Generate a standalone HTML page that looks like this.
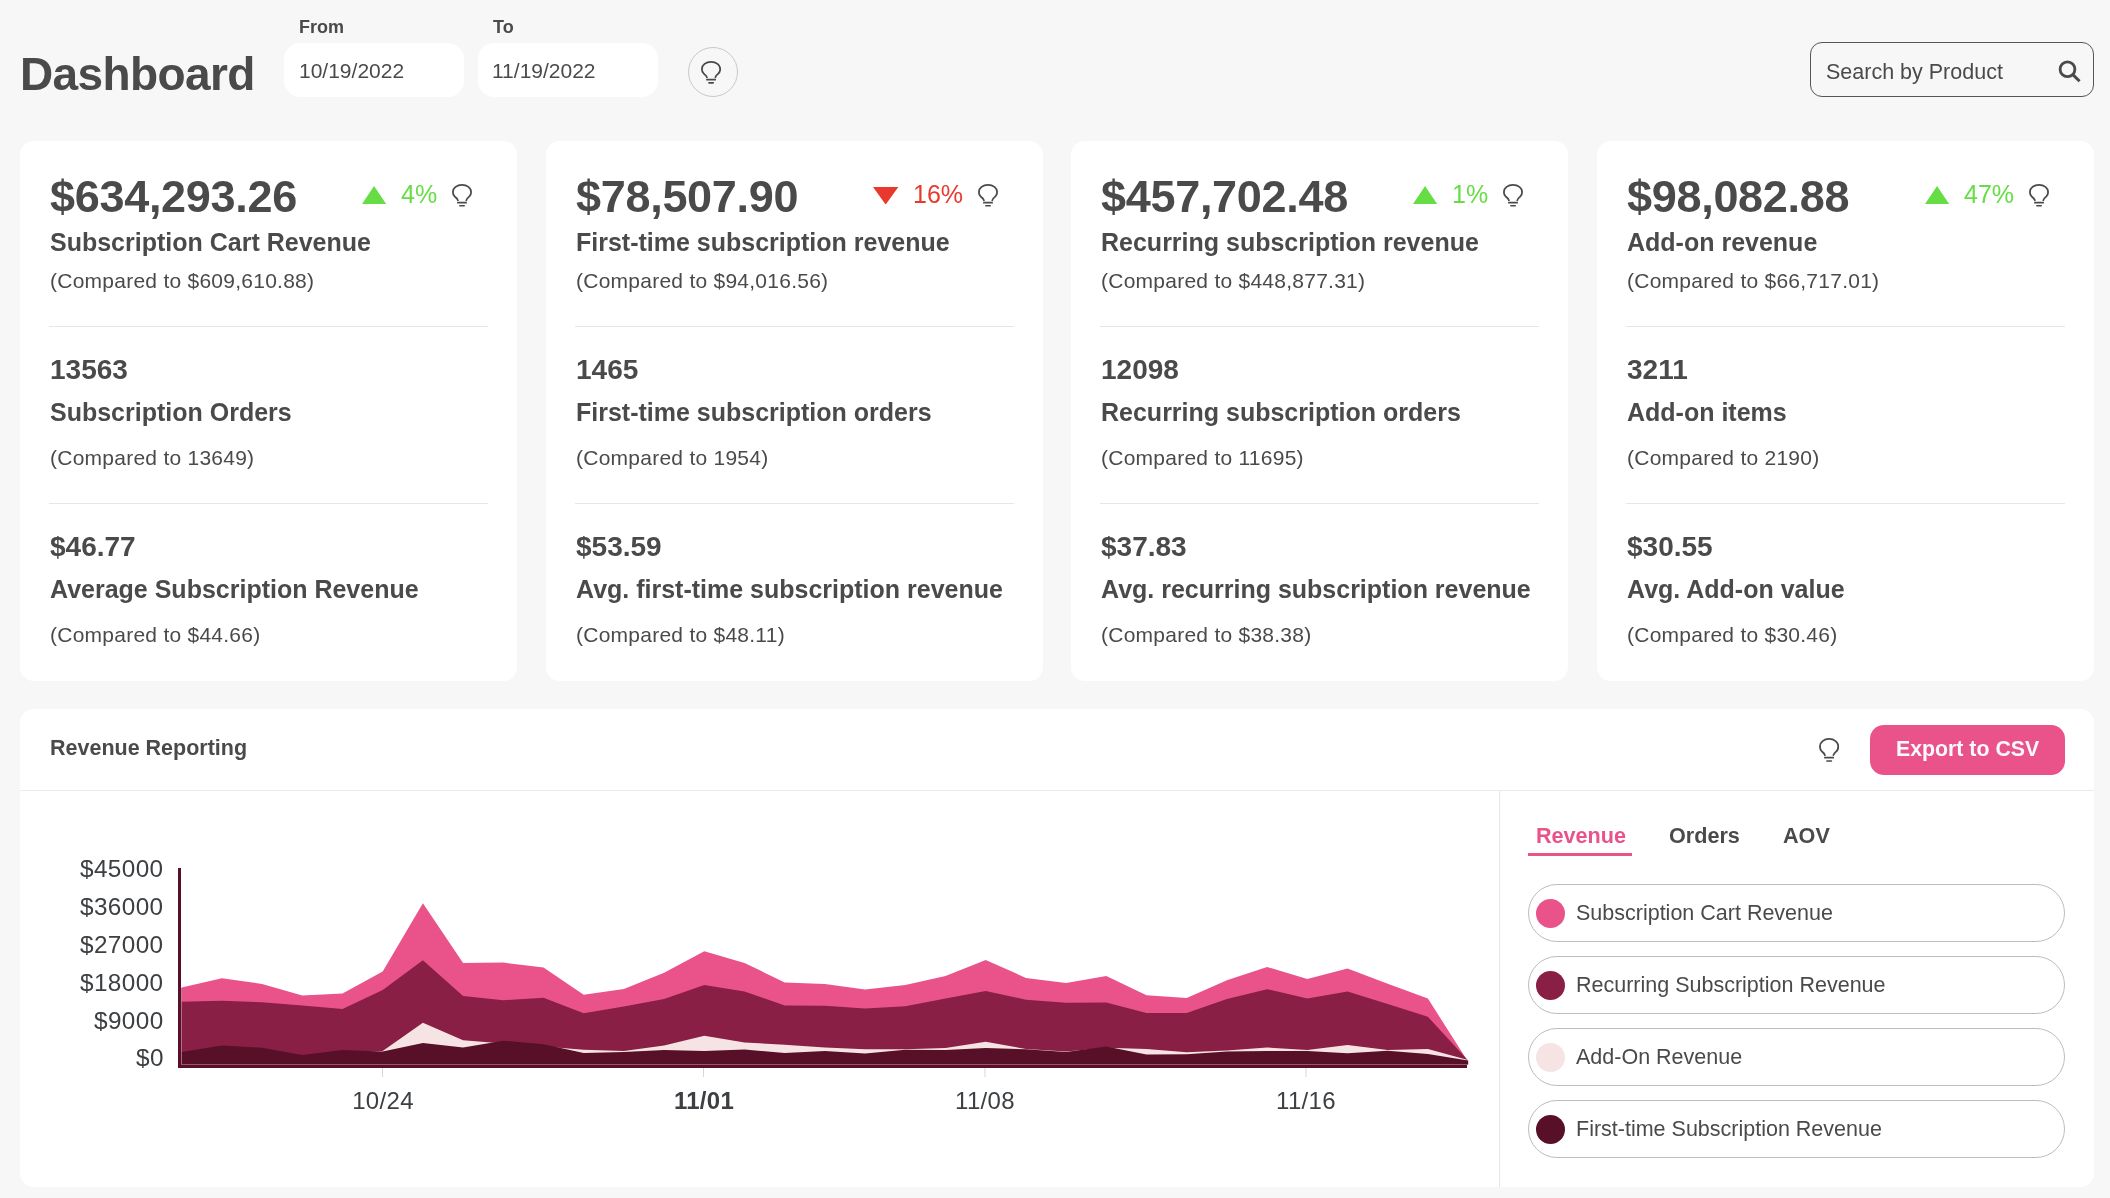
<!DOCTYPE html>
<html><head><meta charset="utf-8"><style>
html,body{margin:0;padding:0;}
body{width:2110px;height:1198px;background:#f7f7f7;position:relative;overflow:hidden;font-family:"Liberation Sans",sans-serif;}
.t{position:absolute;white-space:nowrap;line-height:1;will-change:transform;}
.a{position:absolute;display:block;}
.card{position:absolute;background:#fff;border-radius:14px;}
.hr{position:absolute;height:1px;background:#e6e6e6;}
</style></head><body>
<div class="t" style="left:19.9px;top:51.26px;font-size:46px;font-weight:700;color:#4a4a4a;letter-spacing:-0.6px;">Dashboard</div>
<div class="t" style="left:299px;top:17.76px;font-size:18px;font-weight:700;color:#4a4a4a;">From</div>
<div class="t" style="left:493px;top:17.76px;font-size:18px;font-weight:700;color:#4a4a4a;">To</div>
<div class="a" style="left:284px;top:43px;width:180px;height:54px;background:#fff;border-radius:16px"></div>
<div class="a" style="left:478px;top:43px;width:180px;height:54px;background:#fff;border-radius:16px"></div>
<div class="t" style="left:299px;top:60.12px;font-size:21px;font-weight:400;color:#4a4a4a;">10/19/2022</div>
<div class="t" style="left:492px;top:60.12px;font-size:21px;font-weight:400;color:#4a4a4a;">11/19/2022</div>
<div class="a" style="left:687.5px;top:47px;width:50px;height:50px;border:1px solid #c8c8c8;border-radius:50%;box-sizing:border-box;"></div>
<svg class="a" style="left:700.8px;top:61px" width="20.1" height="22.7" viewBox="0 0 20 24" preserveAspectRatio="none"><path d="M5.9 17.3 C5.6 15.6 4.2 14.6 2.8 13.4 C1.4 12.2 0.9 10.4 0.9 8.4 A9.1 7.5 0 0 1 19.1 8.4 C19.1 10.4 18.6 12.2 17.2 13.4 C15.8 14.6 14.5 15.6 14.3 17.3" fill="none" stroke="#4a4a4a" stroke-width="1.8" stroke-linecap="round"/><line x1="5.9" y1="19.8" x2="14.1" y2="19.8" stroke="#4a4a4a" stroke-width="1.8" stroke-linecap="round"/><line x1="7.9" y1="23.1" x2="12.2" y2="23.1" stroke="#4a4a4a" stroke-width="1.7" stroke-linecap="round"/></svg>
<div class="a" style="left:1810px;top:42px;width:284px;height:55px;border:1.3px solid #555;border-radius:12px;box-sizing:border-box;"></div>
<div class="t" style="left:1826px;top:62.00px;font-size:21.5px;font-weight:400;color:#4a4a4a;">Search by Product</div>
<svg class="a" style="left:2055px;top:58.8px" width="30" height="26" viewBox="0 0 30 26"><circle cx="12.5" cy="10.3" r="7.4" fill="none" stroke="#4a4a4a" stroke-width="2.8"/><line x1="17.8" y1="15.6" x2="24.6" y2="22.3" stroke="#4a4a4a" stroke-width="3"/></svg>
<div class="card" style="left:20.0px;top:141px;width:497px;height:540px"></div>
<div class="t" style="left:50.0px;top:173.61px;font-size:45px;font-weight:700;color:#4a4a4a;letter-spacing:-0.3px;">$634,293.26</div>
<div class="t" style="left:50.0px;top:230.04px;font-size:25px;font-weight:700;color:#4a4a4a;">Subscription Cart Revenue</div>
<div class="t" style="left:50.0px;top:270.02px;font-size:21px;font-weight:400;color:#4a4a4a;letter-spacing:0.25px;">(Compared to $609,610.88)</div>
<div class="hr" style="left:49.0px;top:326px;width:439px"></div>
<div class="t" style="left:50.0px;top:355.50px;font-size:28px;font-weight:700;color:#4a4a4a;">13563</div>
<div class="t" style="left:50.0px;top:399.74px;font-size:25px;font-weight:700;color:#4a4a4a;">Subscription Orders</div>
<div class="t" style="left:50.0px;top:446.82px;font-size:21px;font-weight:400;color:#4a4a4a;letter-spacing:0.25px;">(Compared to 13649)</div>
<div class="hr" style="left:49.0px;top:503px;width:439px"></div>
<div class="t" style="left:50.0px;top:532.50px;font-size:28px;font-weight:700;color:#4a4a4a;">$46.77</div>
<div class="t" style="left:50.0px;top:576.74px;font-size:25px;font-weight:700;color:#4a4a4a;">Average Subscription Revenue</div>
<div class="t" style="left:50.0px;top:623.82px;font-size:21px;font-weight:400;color:#4a4a4a;letter-spacing:0.25px;">(Compared to $44.66)</div>
<svg class="a" style="left:452.0px;top:184.3px" width="20" height="22.6" viewBox="0 0 20 24" preserveAspectRatio="none"><path d="M5.9 17.3 C5.6 15.6 4.2 14.6 2.8 13.4 C1.4 12.2 0.9 10.4 0.9 8.4 A9.1 7.5 0 0 1 19.1 8.4 C19.1 10.4 18.6 12.2 17.2 13.4 C15.8 14.6 14.5 15.6 14.3 17.3" fill="none" stroke="#4a4a4a" stroke-width="1.8" stroke-linecap="round"/><line x1="5.9" y1="19.8" x2="14.1" y2="19.8" stroke="#4a4a4a" stroke-width="1.8" stroke-linecap="round"/><line x1="7.9" y1="23.1" x2="12.2" y2="23.1" stroke="#4a4a4a" stroke-width="1.7" stroke-linecap="round"/></svg>
<div class="t" style="right:1672.4px;top:181.94px;font-size:25px;font-weight:400;color:#66dd44;">4%</div>
<svg class="a" style="left:362.4px;top:186.3px" width="24.1" height="18" viewBox="0 0 24 18" preserveAspectRatio="none"><path d="M12 0 L24 18 L0 18 Z" fill="#66dd44"/></svg>
<div class="card" style="left:545.7px;top:141px;width:497px;height:540px"></div>
<div class="t" style="left:575.7px;top:173.61px;font-size:45px;font-weight:700;color:#4a4a4a;letter-spacing:-0.3px;">$78,507.90</div>
<div class="t" style="left:575.7px;top:230.04px;font-size:25px;font-weight:700;color:#4a4a4a;">First-time subscription revenue</div>
<div class="t" style="left:575.7px;top:270.02px;font-size:21px;font-weight:400;color:#4a4a4a;letter-spacing:0.25px;">(Compared to $94,016.56)</div>
<div class="hr" style="left:574.7px;top:326px;width:439px"></div>
<div class="t" style="left:575.7px;top:355.50px;font-size:28px;font-weight:700;color:#4a4a4a;">1465</div>
<div class="t" style="left:575.7px;top:399.74px;font-size:25px;font-weight:700;color:#4a4a4a;">First-time subscription orders</div>
<div class="t" style="left:575.7px;top:446.82px;font-size:21px;font-weight:400;color:#4a4a4a;letter-spacing:0.25px;">(Compared to 1954)</div>
<div class="hr" style="left:574.7px;top:503px;width:439px"></div>
<div class="t" style="left:575.7px;top:532.50px;font-size:28px;font-weight:700;color:#4a4a4a;">$53.59</div>
<div class="t" style="left:575.7px;top:576.74px;font-size:25px;font-weight:700;color:#4a4a4a;">Avg. first-time subscription revenue</div>
<div class="t" style="left:575.7px;top:623.82px;font-size:21px;font-weight:400;color:#4a4a4a;letter-spacing:0.25px;">(Compared to $48.11)</div>
<svg class="a" style="left:977.7px;top:184.3px" width="20" height="22.6" viewBox="0 0 20 24" preserveAspectRatio="none"><path d="M5.9 17.3 C5.6 15.6 4.2 14.6 2.8 13.4 C1.4 12.2 0.9 10.4 0.9 8.4 A9.1 7.5 0 0 1 19.1 8.4 C19.1 10.4 18.6 12.2 17.2 13.4 C15.8 14.6 14.5 15.6 14.3 17.3" fill="none" stroke="#4a4a4a" stroke-width="1.8" stroke-linecap="round"/><line x1="5.9" y1="19.8" x2="14.1" y2="19.8" stroke="#4a4a4a" stroke-width="1.8" stroke-linecap="round"/><line x1="7.9" y1="23.1" x2="12.2" y2="23.1" stroke="#4a4a4a" stroke-width="1.7" stroke-linecap="round"/></svg>
<div class="t" style="right:1147.3px;top:181.94px;font-size:25px;font-weight:400;color:#e8392f;">16%</div>
<svg class="a" style="left:873.2px;top:186.6px" width="25.3" height="17.6" viewBox="0 0 25 18" preserveAspectRatio="none"><path d="M0 0 L25 0 L12.5 18 Z" fill="#e8392f"/></svg>
<div class="card" style="left:1071.3px;top:141px;width:497px;height:540px"></div>
<div class="t" style="left:1101.3px;top:173.61px;font-size:45px;font-weight:700;color:#4a4a4a;letter-spacing:-0.3px;">$457,702.48</div>
<div class="t" style="left:1101.3px;top:230.04px;font-size:25px;font-weight:700;color:#4a4a4a;">Recurring subscription revenue</div>
<div class="t" style="left:1101.3px;top:270.02px;font-size:21px;font-weight:400;color:#4a4a4a;letter-spacing:0.25px;">(Compared to $448,877.31)</div>
<div class="hr" style="left:1100.3px;top:326px;width:439px"></div>
<div class="t" style="left:1101.3px;top:355.50px;font-size:28px;font-weight:700;color:#4a4a4a;">12098</div>
<div class="t" style="left:1101.3px;top:399.74px;font-size:25px;font-weight:700;color:#4a4a4a;">Recurring subscription orders</div>
<div class="t" style="left:1101.3px;top:446.82px;font-size:21px;font-weight:400;color:#4a4a4a;letter-spacing:0.25px;">(Compared to 11695)</div>
<div class="hr" style="left:1100.3px;top:503px;width:439px"></div>
<div class="t" style="left:1101.3px;top:532.50px;font-size:28px;font-weight:700;color:#4a4a4a;">$37.83</div>
<div class="t" style="left:1101.3px;top:576.74px;font-size:25px;font-weight:700;color:#4a4a4a;">Avg. recurring subscription revenue</div>
<div class="t" style="left:1101.3px;top:623.82px;font-size:21px;font-weight:400;color:#4a4a4a;letter-spacing:0.25px;">(Compared to $38.38)</div>
<svg class="a" style="left:1503.3px;top:184.3px" width="20" height="22.6" viewBox="0 0 20 24" preserveAspectRatio="none"><path d="M5.9 17.3 C5.6 15.6 4.2 14.6 2.8 13.4 C1.4 12.2 0.9 10.4 0.9 8.4 A9.1 7.5 0 0 1 19.1 8.4 C19.1 10.4 18.6 12.2 17.2 13.4 C15.8 14.6 14.5 15.6 14.3 17.3" fill="none" stroke="#4a4a4a" stroke-width="1.8" stroke-linecap="round"/><line x1="5.9" y1="19.8" x2="14.1" y2="19.8" stroke="#4a4a4a" stroke-width="1.8" stroke-linecap="round"/><line x1="7.9" y1="23.1" x2="12.2" y2="23.1" stroke="#4a4a4a" stroke-width="1.7" stroke-linecap="round"/></svg>
<div class="t" style="right:621.7px;top:181.94px;font-size:25px;font-weight:400;color:#66dd44;">1%</div>
<svg class="a" style="left:1413.3000000000002px;top:186.3px" width="24.1" height="18" viewBox="0 0 24 18" preserveAspectRatio="none"><path d="M12 0 L24 18 L0 18 Z" fill="#66dd44"/></svg>
<div class="card" style="left:1597.0px;top:141px;width:497px;height:540px"></div>
<div class="t" style="left:1627.0px;top:173.61px;font-size:45px;font-weight:700;color:#4a4a4a;letter-spacing:-0.3px;">$98,082.88</div>
<div class="t" style="left:1627.0px;top:230.04px;font-size:25px;font-weight:700;color:#4a4a4a;">Add-on revenue</div>
<div class="t" style="left:1627.0px;top:270.02px;font-size:21px;font-weight:400;color:#4a4a4a;letter-spacing:0.25px;">(Compared to $66,717.01)</div>
<div class="hr" style="left:1626.0px;top:326px;width:439px"></div>
<div class="t" style="left:1627.0px;top:355.50px;font-size:28px;font-weight:700;color:#4a4a4a;">3211</div>
<div class="t" style="left:1627.0px;top:399.74px;font-size:25px;font-weight:700;color:#4a4a4a;">Add-on items</div>
<div class="t" style="left:1627.0px;top:446.82px;font-size:21px;font-weight:400;color:#4a4a4a;letter-spacing:0.25px;">(Compared to 2190)</div>
<div class="hr" style="left:1626.0px;top:503px;width:439px"></div>
<div class="t" style="left:1627.0px;top:532.50px;font-size:28px;font-weight:700;color:#4a4a4a;">$30.55</div>
<div class="t" style="left:1627.0px;top:576.74px;font-size:25px;font-weight:700;color:#4a4a4a;">Avg. Add-on value</div>
<div class="t" style="left:1627.0px;top:623.82px;font-size:21px;font-weight:400;color:#4a4a4a;letter-spacing:0.25px;">(Compared to $30.46)</div>
<svg class="a" style="left:2029.0px;top:184.3px" width="20" height="22.6" viewBox="0 0 20 24" preserveAspectRatio="none"><path d="M5.9 17.3 C5.6 15.6 4.2 14.6 2.8 13.4 C1.4 12.2 0.9 10.4 0.9 8.4 A9.1 7.5 0 0 1 19.1 8.4 C19.1 10.4 18.6 12.2 17.2 13.4 C15.8 14.6 14.5 15.6 14.3 17.3" fill="none" stroke="#4a4a4a" stroke-width="1.8" stroke-linecap="round"/><line x1="5.9" y1="19.8" x2="14.1" y2="19.8" stroke="#4a4a4a" stroke-width="1.8" stroke-linecap="round"/><line x1="7.9" y1="23.1" x2="12.2" y2="23.1" stroke="#4a4a4a" stroke-width="1.7" stroke-linecap="round"/></svg>
<div class="t" style="right:96.0px;top:181.94px;font-size:25px;font-weight:400;color:#66dd44;">47%</div>
<svg class="a" style="left:1925.4px;top:186.3px" width="24.1" height="18" viewBox="0 0 24 18" preserveAspectRatio="none"><path d="M12 0 L24 18 L0 18 Z" fill="#66dd44"/></svg>
<div class="card" style="left:20px;top:709px;width:2074px;height:478px"></div>
<div class="t" style="left:50px;top:738.30px;font-size:21.5px;font-weight:700;color:#4a4a4a;">Revenue Reporting</div>
<svg class="a" style="left:1819.2px;top:738px" width="20.2" height="23.9" viewBox="0 0 20 24" preserveAspectRatio="none"><path d="M5.9 17.3 C5.6 15.6 4.2 14.6 2.8 13.4 C1.4 12.2 0.9 10.4 0.9 8.4 A9.1 7.5 0 0 1 19.1 8.4 C19.1 10.4 18.6 12.2 17.2 13.4 C15.8 14.6 14.5 15.6 14.3 17.3" fill="none" stroke="#4a4a4a" stroke-width="1.8" stroke-linecap="round"/><line x1="5.9" y1="19.8" x2="14.1" y2="19.8" stroke="#4a4a4a" stroke-width="1.8" stroke-linecap="round"/><line x1="7.9" y1="23.1" x2="12.2" y2="23.1" stroke="#4a4a4a" stroke-width="1.7" stroke-linecap="round"/></svg>
<div class="a" style="left:1870px;top:725px;width:195px;height:50px;background:#e9538a;border-radius:14px"></div>
<div class="t" style="left:1896px;top:738.77px;font-size:21.3px;font-weight:700;color:#fafafa;">Export to CSV</div>
<div class="a" style="left:20px;top:790px;width:2074px;height:1px;background:#ebebeb"></div>
<div class="a" style="left:1499.2px;top:791px;width:1px;height:396px;background:#e6e6e6"></div>
<div class="t" style="left:1536px;top:825.22px;font-size:21.6px;font-weight:700;color:#e9538a;">Revenue</div>
<div class="t" style="left:1669px;top:825.22px;font-size:21.6px;font-weight:700;color:#4a4a4a;">Orders</div>
<div class="t" style="left:1783px;top:825.22px;font-size:21.6px;font-weight:700;color:#4a4a4a;">AOV</div>
<div class="a" style="left:1528px;top:853px;width:104px;height:3px;background:#e9538a"></div>
<div class="a" style="left:1528px;top:884px;width:537px;height:58px;border:1px solid #bdbdbd;border-radius:29px;box-sizing:border-box"></div>
<div class="a" style="left:1536px;top:899px;width:29px;height:29px;border-radius:50%;background:#e9538a"></div>
<div class="t" style="left:1576px;top:903.00px;font-size:21.5px;font-weight:400;color:#4a4a4a;">Subscription Cart Revenue</div>
<div class="a" style="left:1528px;top:956px;width:537px;height:58px;border:1px solid #bdbdbd;border-radius:29px;box-sizing:border-box"></div>
<div class="a" style="left:1536px;top:971px;width:29px;height:29px;border-radius:50%;background:#891f44"></div>
<div class="t" style="left:1576px;top:975.00px;font-size:21.5px;font-weight:400;color:#4a4a4a;">Recurring Subscription Revenue</div>
<div class="a" style="left:1528px;top:1028px;width:537px;height:58px;border:1px solid #bdbdbd;border-radius:29px;box-sizing:border-box"></div>
<div class="a" style="left:1536px;top:1043px;width:29px;height:29px;border-radius:50%;background:#f6e4e4"></div>
<div class="t" style="left:1576px;top:1047.00px;font-size:21.5px;font-weight:400;color:#4a4a4a;">Add-On Revenue</div>
<div class="a" style="left:1528px;top:1100px;width:537px;height:58px;border:1px solid #bdbdbd;border-radius:29px;box-sizing:border-box"></div>
<div class="a" style="left:1536px;top:1115px;width:29px;height:29px;border-radius:50%;background:#571028"></div>
<div class="t" style="left:1576px;top:1119.00px;font-size:21.5px;font-weight:400;color:#4a4a4a;">First-time Subscription Revenue</div>
<div class="t" style="right:1946.6px;top:856.93px;font-size:24.3px;font-weight:400;color:#3c4043;letter-spacing:0.4px;">$45000</div>
<div class="t" style="right:1946.6px;top:894.83px;font-size:24.3px;font-weight:400;color:#3c4043;letter-spacing:0.4px;">$36000</div>
<div class="t" style="right:1946.6px;top:932.73px;font-size:24.3px;font-weight:400;color:#3c4043;letter-spacing:0.4px;">$27000</div>
<div class="t" style="right:1946.6px;top:970.63px;font-size:24.3px;font-weight:400;color:#3c4043;letter-spacing:0.4px;">$18000</div>
<div class="t" style="right:1946.6px;top:1008.53px;font-size:24.3px;font-weight:400;color:#3c4043;letter-spacing:0.4px;">$9000</div>
<div class="t" style="right:1946.6px;top:1046.43px;font-size:24.3px;font-weight:400;color:#3c4043;letter-spacing:0.4px;">$0</div>
<div class="t" style="left:382.65px;transform:translateX(-50%);top:1088.78px;font-size:24px;font-weight:400;color:#3c4043;letter-spacing:0.3px;">10/24</div>
<div class="t" style="left:703.65px;transform:translateX(-50%);top:1088.78px;font-size:24px;font-weight:700;color:#3c4043;letter-spacing:0.3px;">11/01</div>
<div class="t" style="left:985.15px;transform:translateX(-50%);top:1088.78px;font-size:24px;font-weight:400;color:#3c4043;letter-spacing:0.3px;">11/08</div>
<div class="t" style="left:1306.15px;transform:translateX(-50%);top:1088.78px;font-size:24px;font-weight:400;color:#3c4043;letter-spacing:0.3px;">11/16</div>
<svg class="a" style="left:0;top:0" width="2110" height="1198" viewBox="0 0 2110 1198"><polygon points="181.7,1064.5 181.7,987.4 221.9,978.2 262.1,983.9 302.3,995.5 342.5,993.4 382.7,971.6 422.9,903.2 463.1,962.9 503.3,962.6 543.5,967.4 583.7,994.8 623.9,988.9 664.1,972.7 704.3,951.3 744.5,962.9 784.7,982.4 824.9,983.9 865.1,989.5 905.3,985.0 945.5,976.0 985.7,959.9 1025.9,977.9 1066.1,982.9 1106.3,976.1 1146.5,995.2 1186.7,997.9 1226.9,980.2 1267.1,967.0 1307.3,979.0 1347.5,968.6 1387.7,983.8 1427.9,998.6 1468.1,1061.7 1468.1,1064.5" fill="#e9538a"/><polygon points="181.7,1064.5 181.7,1001.7 221.9,1000.8 262.1,1002.3 302.3,1005.4 342.5,1009.0 382.7,989.9 422.9,960.3 463.1,996.0 503.3,1000.2 543.5,997.8 583.7,1013.2 623.9,1006.5 664.1,999.0 704.3,985.1 744.5,991.4 784.7,1005.4 824.9,1005.7 865.1,1008.4 905.3,1006.3 945.5,998.5 985.7,991.1 1025.9,999.7 1066.1,1002.7 1106.3,1002.4 1146.5,1013.0 1186.7,1012.9 1226.9,999.0 1267.1,989.2 1307.3,998.5 1347.5,991.4 1387.7,1004.0 1427.9,1016.7 1468.1,1060.6 1468.1,1064.5" fill="#891f44"/><polygon points="181.7,1064.5 181.7,1054.0 221.9,1047.5 262.1,1050.0 302.3,1057.0 342.5,1052.0 382.7,1051.1 422.9,1022.7 463.1,1040.3 503.3,1043.4 543.5,1046.6 583.7,1049.7 623.9,1051.0 664.1,1045.5 704.3,1035.8 744.5,1042.5 784.7,1044.8 824.9,1047.5 865.1,1049.3 905.3,1049.3 945.5,1048.1 985.7,1041.8 1025.9,1049.0 1066.1,1051.6 1106.3,1047.8 1146.5,1049.0 1186.7,1052.3 1226.9,1050.5 1267.1,1047.5 1307.3,1050.0 1347.5,1045.1 1387.7,1050.0 1427.9,1049.1 1468.1,1060.0 1468.1,1064.5" fill="#f6e4e4"/><polygon points="181.7,1064.5 181.7,1052.0 221.9,1045.5 262.1,1047.8 302.3,1054.9 342.5,1050.0 382.7,1051.6 422.9,1043.0 463.1,1047.5 503.3,1040.7 543.5,1044.3 583.7,1052.9 623.9,1052.0 664.1,1050.0 704.3,1051.1 744.5,1049.6 784.7,1053.1 824.9,1051.1 865.1,1053.5 905.3,1049.8 945.5,1050.0 985.7,1048.1 1025.9,1049.3 1066.1,1052.0 1106.3,1046.6 1146.5,1054.5 1186.7,1054.3 1226.9,1051.6 1267.1,1051.1 1307.3,1051.1 1347.5,1053.2 1387.7,1050.8 1427.9,1053.9 1468.1,1060.4 1468.1,1064.5" fill="#571028"/><rect x="181" y="1064" width="1270" height="1" fill="#9a5570"/><rect x="181" y="988" width="1" height="77" fill="#a06078" opacity="0.7"/><rect x="178" y="868" width="3" height="200" fill="#5a0f29"/><rect x="178" y="1065" width="1289" height="3" fill="#5a0f29"/><rect x="382.0" y="1068" width="1" height="9" fill="#d8d8d8"/><rect x="703.0" y="1068" width="1" height="9" fill="#d8d8d8"/><rect x="984.5" y="1068" width="1" height="9" fill="#d8d8d8"/><rect x="1305.5" y="1068" width="1" height="9" fill="#d8d8d8"/></svg>
</body></html>
